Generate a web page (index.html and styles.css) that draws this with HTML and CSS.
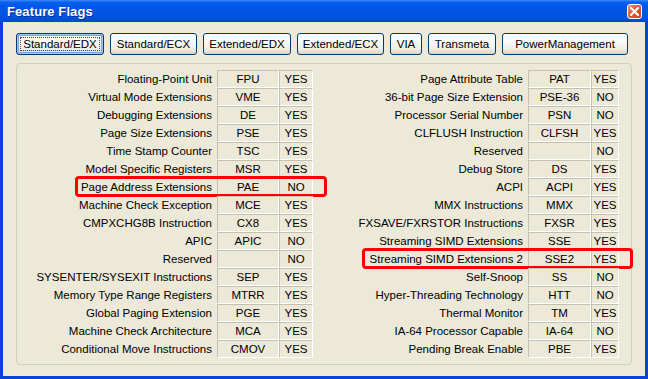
FILE: index.html
```html
<!DOCTYPE html>
<html>
<head>
<meta charset="utf-8">
<link rel="stylesheet" href="styles.css">
</head>
<body>
<div class="window">
  <div class="titlebar">
    <span class="title">Feature Flags</span>
    <span class="close"><svg width="9" height="9" viewBox="0 0 9 9"><path d="M1 1L8 8M8 1L1 8" stroke="#fff" stroke-width="2" stroke-linecap="square"/></svg></span>
  </div>
  <div class="body">
    <div class="tabs">
      <button class="btn btn-default w88">Standard/EDX</button>
      <button class="btn w87">Standard/ECX</button>
      <button class="btn w88">Extended/EDX</button>
      <button class="btn w87">Extended/ECX</button>
      <button class="btn w32">VIA</button>
      <button class="btn w68">Transmeta</button>
      <button class="btn w126">PowerManagement</button>
    </div>
    <div class="panel">
      <div class="table table-left">
        <div class="row"><span class="label">Floating-Point Unit</span><span class="cell">FPU</span><span class="cell">YES</span></div>
        <div class="row"><span class="label">Virtual Mode Extensions</span><span class="cell">VME</span><span class="cell">YES</span></div>
        <div class="row"><span class="label">Debugging Extensions</span><span class="cell">DE</span><span class="cell">YES</span></div>
        <div class="row"><span class="label">Page Size Extensions</span><span class="cell">PSE</span><span class="cell">YES</span></div>
        <div class="row"><span class="label">Time Stamp Counter</span><span class="cell">TSC</span><span class="cell">YES</span></div>
        <div class="row"><span class="label">Model Specific Registers</span><span class="cell">MSR</span><span class="cell">YES</span></div>
        <div class="row hl hl-left"><span class="label">Page Address Extensions</span><span class="cell">PAE</span><span class="cell">NO</span></div>
        <div class="row"><span class="label">Machine Check Exception</span><span class="cell">MCE</span><span class="cell">YES</span></div>
        <div class="row"><span class="label">CMPXCHG8B Instruction</span><span class="cell">CX8</span><span class="cell">YES</span></div>
        <div class="row"><span class="label">APIC</span><span class="cell">APIC</span><span class="cell">NO</span></div>
        <div class="row"><span class="label">Reserved</span><span class="cell"></span><span class="cell">NO</span></div>
        <div class="row"><span class="label">SYSENTER/SYSEXIT Instructions</span><span class="cell">SEP</span><span class="cell">YES</span></div>
        <div class="row"><span class="label">Memory Type Range Registers</span><span class="cell">MTRR</span><span class="cell">YES</span></div>
        <div class="row"><span class="label">Global Paging Extension</span><span class="cell">PGE</span><span class="cell">YES</span></div>
        <div class="row"><span class="label">Machine Check Architecture</span><span class="cell">MCA</span><span class="cell">YES</span></div>
        <div class="row"><span class="label">Conditional Move Instructions</span><span class="cell">CMOV</span><span class="cell">YES</span></div>
      </div>
      <div class="table table-right">
        <div class="row"><span class="label">Page Attribute Table</span><span class="cell">PAT</span><span class="cell">YES</span></div>
        <div class="row"><span class="label">36-bit Page Size Extension</span><span class="cell">PSE-36</span><span class="cell">NO</span></div>
        <div class="row"><span class="label">Processor Serial Number</span><span class="cell">PSN</span><span class="cell">NO</span></div>
        <div class="row"><span class="label">CLFLUSH Instruction</span><span class="cell">CLFSH</span><span class="cell">YES</span></div>
        <div class="row"><span class="label">Reserved</span><span class="cell"></span><span class="cell">NO</span></div>
        <div class="row"><span class="label">Debug Store</span><span class="cell">DS</span><span class="cell">YES</span></div>
        <div class="row"><span class="label">ACPI</span><span class="cell">ACPI</span><span class="cell">YES</span></div>
        <div class="row"><span class="label">MMX Instructions</span><span class="cell">MMX</span><span class="cell">YES</span></div>
        <div class="row"><span class="label">FXSAVE/FXRSTOR Instructions</span><span class="cell">FXSR</span><span class="cell">YES</span></div>
        <div class="row"><span class="label">Streaming SIMD Extensions</span><span class="cell">SSE</span><span class="cell">YES</span></div>
        <div class="row hl hl-right"><span class="label">Streaming SIMD Extensions 2</span><span class="cell">SSE2</span><span class="cell">YES</span></div>
        <div class="row"><span class="label">Self-Snoop</span><span class="cell">SS</span><span class="cell">NO</span></div>
        <div class="row"><span class="label">Hyper-Threading Technology</span><span class="cell">HTT</span><span class="cell">NO</span></div>
        <div class="row"><span class="label">Thermal Monitor</span><span class="cell">TM</span><span class="cell">YES</span></div>
        <div class="row"><span class="label">IA-64 Processor Capable</span><span class="cell">IA-64</span><span class="cell">NO</span></div>
        <div class="row"><span class="label">Pending Break Enable</span><span class="cell">PBE</span><span class="cell">YES</span></div>
      </div>
    </div>
  </div>
</div>
</body>
</html>
```
FILE: styles.css
```css
* { box-sizing: border-box; }
html, body { margin: 0; padding: 0; background: #ECE9D8; }
body { font-family: "Liberation Sans", Arial, sans-serif; font-size: 11.5px; color: #000; }

.window { width: 648px; height: 379px; display: flex; flex-direction: column; overflow: hidden; }

.titlebar {
  height: 22px;
  flex: none;
  display: flex;
  align-items: center;
  justify-content: space-between;
  padding: 0 5px 0 7px;
  background: linear-gradient(#3E8DF7 0, #0A62F2 2px, #0058EA 6px, #0055E5 50%, #0052E0 80%, #0047CF 100%);
}
.title {
  color: #fff;
  font-weight: bold;
  font-size: 13px;
  text-shadow: 1px 1px 0 #0A2A9A;
  letter-spacing: 0.1px;
}
.close {
  width: 15px;
  height: 15px;
  border: 1px solid #fff;
  border-radius: 3px;
  background: linear-gradient(135deg, #F19A7C 0%, #E0603A 40%, #C8401A 100%);
  display: flex;
  align-items: center;
  justify-content: center;
  margin-right: 1px;
}
.close svg { display: block; }

.body {
  flex: 1;
  border-left: 3px solid #0842D6;
  border-right: 3px solid #0842D6;
  border-bottom: 3px solid #0842D6;
  padding: 11px 0 0 13px;
  display: flex;
  flex-direction: column;
}

.tabs { display: flex; gap: 6px; height: 22px; }
.btn {
  height: 22px;
  padding: 0;
  font-family: inherit;
  font-size: 11.5px;
  color: #000;
  border: 1px solid #003C74;
  border-radius: 3px;
  background: linear-gradient(#FFFFFF 0%, #F7F7F4 45%, #EEEDE5 75%, #D8D3C6 100%);
  position: relative;
}
.btn-default {
  box-shadow: inset 0 0 0 1px #A9C2EE, inset 0 0 0 2px #7DA2E8;
}
.btn-default::after {
  content: "";
  position: absolute;
  left: 3px; right: 3px; top: 3px; bottom: 3px;
  border: 1px dotted #444;
}
.w88 { width: 88px; }
.w87 { width: 87px; }
.w32 { width: 32px; }
.w68 { width: 68px; }
.w126 { width: 126px; }

.panel {
  margin-top: 8px;
  width: 616px;
  height: 302px;
  border: 1px solid #D0D0BF;
  border-radius: 4px;
  padding: 6px 0 0 3px;
  display: flex;
  gap: 17px;
}

.row {
  display: grid;
  height: 18px;
  position: relative;
}
.table-left .row { grid-template-columns: 197px 62px 34px; }
.table-right .row { grid-template-columns: 198px 63px 28px; }

.label {
  text-align: right;
  padding-right: 5px;
  line-height: 18px;
  white-space: nowrap;
}
.cell {
  text-align: center;
  line-height: 16px;
  border-top: 1px solid #C4C1B0;
  border-left: 1px solid #C4C1B0;
  border-bottom: 1px solid #FFFFFF;
  border-right: 1px solid #FFFFFF;
  white-space: nowrap;
}

.hl::after {
  content: "";
  position: absolute;
  top: -2px;
  bottom: -1px;
  right: -14px;
  border: 3px solid #FF0000;
  border-radius: 4px;
  pointer-events: none;
}
.hl-left::after { left: 55px; }
.hl-right::after { left: 32px; }
```
